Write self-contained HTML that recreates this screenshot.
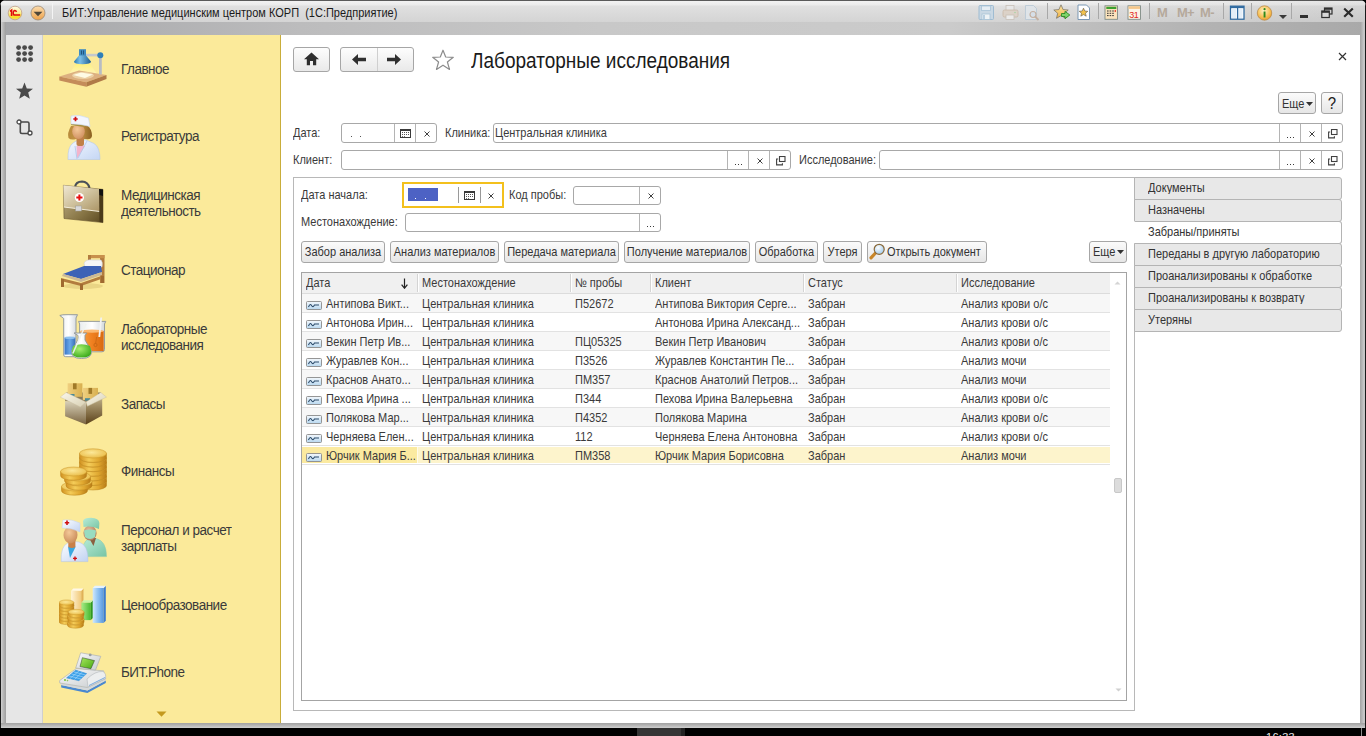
<!DOCTYPE html>
<html><head><meta charset="utf-8">
<style>
*{box-sizing:border-box;margin:0;padding:0}
html,body{width:1366px;height:736px;overflow:hidden;background:#000;font-family:"Liberation Sans",sans-serif;font-size:11px;letter-spacing:0;color:#333}
.a{position:absolute}
#win{position:absolute;left:0;top:0;width:1366px;height:728px;background:#a9abae;border-radius:6px 6px 0 0;overflow:hidden}
#rd{position:absolute;left:1365px;top:0;width:1px;height:728px;background:#1a1a1a}
#tb{position:absolute;left:0;top:0;width:1366px;height:22px;background:linear-gradient(90deg,rgba(0,0,0,0) 0,rgba(0,0,0,0) 1000px,rgba(0,0,0,0.05) 1366px),linear-gradient(#5a5a5a 0,#5a5a5a 1px,#f2f2f2 1px,#ebebeb 5px,#e0e0e0 6px,#d4d4d4 22px)}
#band{position:absolute;left:0;top:22px;width:1366px;height:13px;background:linear-gradient(90deg,#a4a5a8 0,#bcbcbd 300px,#c8c8c8 600px,#cbcbcb 950px,#b3b3b3 1200px,#a9a9a9 1366px)}
#lb{position:absolute;left:0;top:0;width:1px;height:728px;background:#1a1a1a}
#lb2{position:absolute;left:1px;top:22px;width:5px;height:706px;background:linear-gradient(90deg,#d0d0d0 0,#c4c4c4 1px,#b0b0b0 3px,#9e9e9e 5px)}
#rb{position:absolute;left:1360px;top:22px;width:6px;height:706px;background:linear-gradient(90deg,#a4a4a4 0,#b4b4b4 2px,#cacaca 4px,#c0c0c0 5px,#1a1a1a 5px)}
#bb{position:absolute;left:1px;top:723px;width:1364px;height:5px;background:linear-gradient(#a2a2a2 0,#b2b2b2 2px,#c6c6c6 4px,#cfcfcf 5px)}
#content{position:absolute;left:6px;top:35px;width:1354px;height:688px;background:#fff}
#lp{position:absolute;left:6px;top:35px;width:37px;height:688px;background:#e6e6e6;border-right:1px solid #cfcfcf}
#yp{position:absolute;left:43px;top:35px;width:238px;height:688px;background:#fbea9a;border-right:1px solid #c9ad3a}
.si{position:absolute;left:121px;font-size:13.5px;letter-spacing:-0.5px;color:#3a3a3a;line-height:14px;white-space:nowrap;transform:scaleY(1.13);transform-origin:0 0}
.btn{position:absolute;border:1px solid #a6a6a6;border-radius:3px;background:linear-gradient(#fdfdfd,#e9e9e9);}
.fld{position:absolute;border:1px solid #a8a8a8;border-radius:3px;background:#fff}
.lbl{position:absolute;color:#3a3a3a;white-space:nowrap;transform:scaleY(1.12);transform-origin:0 0}
.dv{position:absolute;top:0;bottom:0;width:1px;background:#b8b8b8}
.tab{position:absolute;left:1134px;width:208px;height:23px;background:#e8e8e8;border:1px solid #b4b4b4;border-radius:0 3px 3px 0;padding-left:13px;line-height:19px;color:#333}
.cb{position:absolute;height:22px;top:241px;border:1px solid #a6a6a6;border-radius:3px;background:linear-gradient(#fbfbfb,#e6e6e6);line-height:19px;text-align:center;color:#333;white-space:nowrap}
.hd{position:absolute;top:0;height:20px;line-height:20px;color:#333;white-space:nowrap}
.row{position:absolute;left:0;width:808px;height:19px;border-bottom:1px solid #e4e4e4}
.ic{text-align:center;line-height:0}
.t{display:inline-block;transform:scaleY(1.12);transform-origin:0 0;position:relative;top:-1px}
.c{position:absolute;top:0;line-height:18px;white-space:nowrap;color:#333}
</style></head><body>
<div class="a" style="left:637px;top:728px;width:44px;height:8px;background:#353535"></div>
<div class="a" style="left:681px;top:728px;width:4px;height:8px;background:#222"></div>
<div class="a" style="left:1361px;top:728px;width:1px;height:8px;background:#8a8a8a"></div>
<div class="a" style="left:1266px;top:731px;font-size:11px;color:#e8e8e8;line-height:12px;letter-spacing:0.3px">16:33</div>
<div id="win">
  <div id="tb"></div>
  <div id="band"></div>
  <!-- title bar content -->
  <svg class="a" style="left:7px;top:5px" width="16" height="16" viewBox="0 0 16 16">
    <defs><linearGradient id="g1c" x1="0" y1="0" x2="0" y2="1"><stop offset="0" stop-color="#fffbe8"/><stop offset="0.45" stop-color="#fbf09a"/><stop offset="0.8" stop-color="#f8e020"/><stop offset="1" stop-color="#f0e070"/></linearGradient></defs>
    <circle cx="8" cy="8" r="6.8" fill="url(#g1c)" stroke="#c0a088" stroke-width="0.8"/>
    <path d="M3 6.4 L4.6 5.1 V10.9" fill="none" stroke="#e00c0c" stroke-width="1.6"/>
    <path d="M9.6 6.8 Q8.9 5.4 7.6 5.5 Q6.2 5.8 6.2 8 Q6.2 10.1 7.8 10.1 L13.2 10.1" fill="none" stroke="#e00c0c" stroke-width="1.5"/>
  </svg>
  <svg class="a" style="left:30px;top:5px" width="16" height="16" viewBox="0 0 16 16">
    <defs><linearGradient id="gdd" x1="0" y1="0" x2="0" y2="1"><stop offset="0" stop-color="#fbdcae"/><stop offset="1" stop-color="#eea24a"/></linearGradient></defs>
    <circle cx="8" cy="8" r="7" fill="url(#gdd)" stroke="#9a8a78" stroke-width="0.8"/>
    <path d="M3.6 6.8 L12.4 6.8 L8 11.2 Z" fill="#4e4638"/>
  </svg>
  <div class="a" style="left:52px;top:3px;width:1px;height:16px;background:#b8b8b8;border-right:1px solid #f4f4f4"></div>
  <div class="lbl" style="left:62px;top:5px;color:#1a1a1a;line-height:14px">БИТ:Управление медицинским центром КОРП&nbsp; (1С:Предприятие)</div>

  
  <!-- right toolbar icons -->
  <svg class="a" style="left:978px;top:4px" width="17" height="17" viewBox="0 0 17 17">
    <rect x="1" y="1.5" width="14.5" height="14" rx="1" fill="#c9d8e4" stroke="#9fbcd2"/>
    <rect x="3.5" y="2" width="9" height="4.5" fill="#e6eef4" stroke="#a9c3d6" stroke-width="0.8"/>
    <rect x="4" y="10" width="8" height="5.5" fill="#eef3f6" stroke="#a9c3d6" stroke-width="0.8"/>
    <rect x="5" y="11" width="2" height="4" fill="#b9cfe0"/>
  </svg>
  <svg class="a" style="left:1002px;top:4px" width="17" height="17" viewBox="0 0 17 17">
    <rect x="4" y="1.5" width="8" height="5" fill="#e8e8e8" stroke="#c8c0b8" stroke-width="0.8"/>
    <rect x="1" y="6" width="15" height="7" rx="1.5" fill="#dcd2c8" stroke="#c9b7a6" stroke-width="0.8"/>
    <rect x="4" y="11" width="8" height="4.5" fill="#ececec" stroke="#c8c0b8" stroke-width="0.8"/>
    <circle cx="13" cy="8.5" r="0.7" fill="#9bd39b"/>
  </svg>
  <svg class="a" style="left:1024px;top:4px" width="17" height="17" viewBox="0 0 17 17">
    <path d="M1.5 1.5 H9.5 L12.5 4.5 V15.5 H1.5 Z" fill="#dfe4e8" stroke="#b6c6d4" stroke-width="0.8"/>
    <circle cx="9" cy="10.5" r="3" fill="#d6dfe8" stroke="#c4b0a0" stroke-width="1.2"/>
    <path d="M11 12.5 L14.5 16" stroke="#c4b0a0" stroke-width="1.8"/>
  </svg>
  <div class="a" style="left:1047px;top:3px;width:1px;height:16px;background:#a8a8a8"></div>
  <svg class="a" style="left:1053px;top:4px" width="18" height="17" viewBox="0 0 18 17">
    <defs><linearGradient id="gst" x1="0" y1="0" x2="0" y2="1"><stop offset="0" stop-color="#fde7a8"/><stop offset="1" stop-color="#f0b040"/></linearGradient></defs>
    <path d="M8 0.8 L10.1 5.6 L15.2 6 L11.3 9.3 L12.5 14.3 L8 11.6 L3.5 14.3 L4.7 9.3 L0.8 6 L5.9 5.6 Z" fill="url(#gst)" stroke="#6f6a5e" stroke-width="0.7"/>
    <path d="M8.5 9.5 H12 V7.3 L16.8 11 L12 14.7 V12.5 H8.5 Z" fill="#7fd36a" stroke="#2e8a24" stroke-width="0.9"/>
  </svg>
  <svg class="a" style="left:1077px;top:4px" width="14" height="17" viewBox="0 0 14 17">
    <path d="M1 1 H9.5 L12.5 4 V15.5 H1 Z" fill="#fff" stroke="#6e8fae" stroke-width="0.9"/>
    <path d="M6.5 4.2 L7.8 7 L10.8 7.3 L8.5 9.2 L9.2 12.2 L6.5 10.6 L3.8 12.2 L4.5 9.2 L2.2 7.3 L5.2 7 Z" fill="#f2c24c" stroke="#5e5548" stroke-width="0.6"/>
  </svg>
  <div class="a" style="left:1098px;top:3px;width:1px;height:16px;background:#a8a8a8"></div>
  <svg class="a" style="left:1104px;top:5px" width="15" height="15" viewBox="0 0 15 15">
    <rect x="1" y="0.8" width="12.5" height="13.5" fill="#fbe3bd" stroke="#7f8c86" stroke-width="0.9"/>
    <rect x="2.3" y="1.8" width="10" height="2.2" fill="#3aa02e"/>
    <g fill="#333"><rect x="3" y="5.5" width="1.6" height="1"/><rect x="5.6" y="5.5" width="1.6" height="1"/><rect x="3" y="7.8" width="1.6" height="1"/><rect x="5.6" y="7.8" width="1.6" height="1"/><rect x="8.2" y="7.8" width="1.6" height="1"/><rect x="3" y="10.1" width="1.6" height="1"/><rect x="5.6" y="10.1" width="1.6" height="1"/><rect x="8.2" y="10.1" width="1.6" height="1"/><rect x="8.2" y="5.5" width="1.6" height="1"/></g>
    <rect x="10.6" y="5.2" width="1.4" height="1.6" fill="#e03020"/>
  </svg>
  <svg class="a" style="left:1127px;top:5px" width="15" height="15" viewBox="0 0 15 15">
    <rect x="1" y="0.8" width="12.5" height="13.5" fill="#fdf4e6" stroke="#7f8c86" stroke-width="0.9"/>
    <rect x="1.5" y="1.3" width="11.5" height="2.6" fill="#f5c78a"/>
    <text x="2.2" y="12.6" font-family="Liberation Sans" font-size="9" letter-spacing="-0.4" fill="#e02818">31</text>
  </svg>
  <div class="a" style="left:1149px;top:3px;width:1px;height:16px;background:#a8a8a8"></div>
  <div class="a" style="left:1157px;top:6px;font-size:13px;font-weight:bold;letter-spacing:-0.3px;color:#b5a99c;line-height:14px">M</div>
  <div class="a" style="left:1177px;top:6px;font-size:13px;font-weight:bold;letter-spacing:-0.8px;color:#b5a99c;line-height:14px">M+</div>
  <div class="a" style="left:1200px;top:6px;font-size:13px;font-weight:bold;letter-spacing:-0.5px;color:#b5a99c;line-height:14px">M-</div>
  <div class="a" style="left:1223px;top:3px;width:1px;height:16px;background:#a8a8a8"></div>
  <svg class="a" style="left:1229px;top:5px" width="17" height="16" viewBox="0 0 17 16">
    <rect x="1.5" y="1.2" width="13.5" height="13" fill="#fff" stroke="#2f6aa0" stroke-width="1.3"/>
    <rect x="1.5" y="1.2" width="13.5" height="2" fill="#2f6aa0"/>
    <rect x="3" y="3.5" width="4.5" height="9.5" fill="#e3eef8"/><rect x="9" y="3.5" width="4.5" height="9.5" fill="#e3eef8"/>
    <rect x="8" y="2" width="1.2" height="12" fill="#2f6aa0"/>
  </svg>
  <div class="a" style="left:1251px;top:3px;width:1px;height:16px;background:#a8a8a8"></div>
  <svg class="a" style="left:1256px;top:5px" width="17" height="16" viewBox="0 0 17 16">
    <defs><radialGradient id="ginf" cx="0.45" cy="0.35" r="0.7"><stop offset="0" stop-color="#fff3c8"/><stop offset="0.6" stop-color="#f7c25a"/><stop offset="1" stop-color="#e89a2a"/></radialGradient></defs>
    <circle cx="8.5" cy="8" r="7.2" fill="url(#ginf)" stroke="#b48442" stroke-width="0.7"/>
    <rect x="7.6" y="6.5" width="1.9" height="6" fill="#2f8a1c"/><circle cx="8.55" cy="4.2" r="1.1" fill="#2f8a1c"/>
  </svg>
  <svg class="a" style="left:1278px;top:14px" width="10" height="6" viewBox="0 0 10 6"><path d="M1 1 H9 L5 5 Z" fill="#3a3a3a"/></svg>
  <div class="a" style="left:1291px;top:3px;width:1px;height:16px;background:#a8a8a8"></div>
  <div class="a" style="left:1300px;top:15px;width:8px;height:2.5px;background:#303030"></div>
  <svg class="a" style="left:1320px;top:6px" width="14" height="13" viewBox="0 0 14 13">
    <rect x="4.5" y="2" width="7.5" height="6" fill="none" stroke="#303030" stroke-width="1.2"/><rect x="4.5" y="2" width="7.5" height="1.8" fill="#303030"/>
    <rect x="1.8" y="5" width="7.5" height="6.5" fill="#d8d8d8" stroke="#303030" stroke-width="1.2"/><rect x="1.8" y="5" width="7.5" height="1.8" fill="#303030"/>
  </svg>
  <svg class="a" style="left:1342px;top:7px" width="13" height="11" viewBox="0 0 13 11"><path d="M2.2 1.5 L10.8 9.7 M10.8 1.5 L2.2 9.7" stroke="#2c2c2c" stroke-width="2.2"/></svg>
  <div id="lb"></div>
  <div id="lb2"></div>
  <div id="rb"></div><div id="rd"></div>
  <div id="bb"></div>
  <div id="content"></div>
  <div id="lp"></div>
  <div id="yp"></div>
  <!-- left icon panel -->
  <svg class="a" style="left:16px;top:45px" width="18" height="18" viewBox="0 0 18 18" fill="#4a4a4a">
    <circle cx="2.6" cy="2.6" r="2.4"/><circle cx="8.6" cy="2.6" r="2.4"/><circle cx="14.6" cy="2.6" r="2.4"/>
    <circle cx="2.6" cy="8.6" r="2.4"/><circle cx="8.6" cy="8.6" r="2.4"/><circle cx="14.6" cy="8.6" r="2.4"/>
    <circle cx="2.6" cy="14.6" r="2.4"/><circle cx="8.6" cy="14.6" r="2.4"/><circle cx="14.6" cy="14.6" r="2.4"/>
  </svg>
  <svg class="a" style="left:15px;top:82px" width="19" height="18" viewBox="0 0 19 18">
    <path d="M9.5 0.6 L11.8 6.4 L18 6.7 L13.2 10.6 L14.8 16.8 L9.5 13.4 L4.2 16.8 L5.8 10.6 L1 6.7 L7.2 6.4 Z" fill="#4a4a4a"/>
  </svg>
  <svg class="a" style="left:16px;top:119px" width="18" height="17" viewBox="0 0 18 17">
    <path d="M3 3 H11.5 Q13 3 13 4.5 V12.5" fill="none" stroke="#4a4a4a" stroke-width="1.6"/>
    <path d="M4.3 4 V12.8 Q4.3 14.5 6 14.5 H14" fill="none" stroke="#4a4a4a" stroke-width="1.6"/>
    <circle cx="3" cy="3" r="2" fill="#fff" stroke="#4a4a4a" stroke-width="1.3"/>
    <circle cx="14" cy="14" r="2" fill="#fff" stroke="#4a4a4a" stroke-width="1.3"/>
  </svg>

<svg class="a" style="left:59px;top:45.5px" width="48" height="48" viewBox="0 0 48 48">
<defs><linearGradient id="shd" x1="0" y1="0" x2="1" y2="0"><stop offset="0" stop-color="#2a78b0"/><stop offset="0.35" stop-color="#7cc0e8"/><stop offset="1" stop-color="#1f5f90"/></linearGradient>
<linearGradient id="cone" x1="0" y1="0" x2="0" y2="1"><stop offset="0" stop-color="#fff27a"/><stop offset="1" stop-color="#fff7c0" stop-opacity="0.6"/></linearGradient></defs>
<path d="M17 18 L31 18 L38 28 L10 28 Z" fill="url(#cone)"/>
<path d="M0.3 30.5 L20 24.6 L47.5 29 L27.3 36.3 Z" fill="#dcb080"/>
<path d="M0.3 30.5 L27.3 36.3 L27.3 40.8 L0.3 34.5 Z" fill="#c48c5a"/>
<path d="M27.3 36.3 L47.5 29 L47.5 33 L27.3 40.8 Z" fill="#b07a48"/>
<path d="M14 29 L22 26.5 L34 28.5 L26 32 Z" fill="#fdfdf6"/>
<ellipse cx="24" cy="29.5" rx="11" ry="3.5" fill="#fff8d0" opacity="0.45"/>
<rect x="40" y="10" width="2.8" height="18.5" fill="#b8bcc4"/>
<rect x="27" y="7.8" width="14" height="2.6" fill="#c4c8cc"/>
<circle cx="41.3" cy="9.3" r="3" fill="#2f7fb8"/>
<rect x="20" y="3.2" width="7" height="7" fill="#3f8cc0"/>
<rect x="22" y="4.5" width="0.9" height="4" fill="#1f4f78"/><rect x="24" y="4.5" width="0.9" height="4" fill="#1f4f78"/>
<path d="M20 9.5 H27 L32 15.5 Q32 18.2 23.5 18.2 Q15 18.2 15 15.5 Z" fill="url(#shd)"/>
</svg>
<div class="si" style="top:61.8px">Главное</div>
<svg class="a" style="left:59px;top:112.5px" width="48" height="48" viewBox="0 0 48 48">
<defs><linearGradient id="coat" x1="0" y1="0" x2="1" y2="1"><stop offset="0" stop-color="#f4f8ff"/><stop offset="1" stop-color="#c4d6f4"/></linearGradient>
<linearGradient id="hair" x1="0" y1="0" x2="1" y2="0"><stop offset="0" stop-color="#b88a3a"/><stop offset="0.5" stop-color="#c8984a"/><stop offset="1" stop-color="#8a6020"/></linearGradient>
<radialGradient id="face" cx="0.4" cy="0.35" r="0.7"><stop offset="0" stop-color="#f4c898"/><stop offset="1" stop-color="#d09060"/></radialGradient></defs>
<path d="M9 46.5 Q8.5 34 14 30 L19 27 L27 27 L35 30.5 Q41 34 41 46.5 Z" fill="url(#coat)" stroke="#b4c8ec" stroke-width="0.6"/>
<path d="M17.5 33 L26 33 L18 45.5 Z" fill="#f4b4cc"/>
<path d="M16 33 L18 46 M28 28 L19 45" stroke="#a8c0e8" stroke-width="0.7" fill="none"/>
<path d="M12 13 Q8 20 9.5 25 Q12 27.5 17 26 L27 26 Q32 27 33 23 Q33 16 28 12 Z" fill="url(#hair)"/>
<rect x="17.5" y="23" width="7.5" height="10" rx="2" fill="#c08048"/>
<ellipse cx="19.5" cy="18.5" rx="6.3" ry="7.5" fill="url(#face)"/>
<path d="M12 10 L26 12.5 L25 14 L12 12 Z" fill="#a89040"/>
<path d="M12 3 Q20 1 29.5 5 L31 13.5 Q21 10.5 12 11 Z" fill="#f2f6ff" stroke="#c8d6ee" stroke-width="0.6"/>
<path d="M14.3 6 H18.7 M16.5 3.8 V8.2" stroke="#d01010" stroke-width="1.7"/>
</svg>
<div class="si" style="top:128.8px">Регистратура</div>
<svg class="a" style="left:59px;top:179.5px" width="48" height="48" viewBox="0 0 48 48">
<defs><linearGradient id="flap" x1="0" y1="0" x2="1" y2="1"><stop offset="0" stop-color="#f0e8d4"/><stop offset="0.5" stop-color="#cdbf9a"/><stop offset="1" stop-color="#a89060"/></linearGradient>
<linearGradient id="low" x1="0" y1="0" x2="1" y2="1"><stop offset="0" stop-color="#c8b890"/><stop offset="0.6" stop-color="#8a7848"/><stop offset="1" stop-color="#5a4820"/></linearGradient></defs>
<path d="M16 7 Q17 1.5 23 1.5 Q29 1.8 30.5 8" fill="none" stroke="#4a5058" stroke-width="2.2"/>
<path d="M4.4 5.3 L44 9.4 L44 42.6 L5 38.5 Z" fill="url(#low)" stroke="#6a5830" stroke-width="0.6"/>
<path d="M4.4 5.3 L44 9.4 L44 14 L40.5 31.5 L5 27 Z" fill="url(#flap)"/>
<path d="M5 27 L40.5 31.5" stroke="#fbf6e8" stroke-width="0.9"/>
<path d="M40 9 L44 9.4 L44 42.6 L40.5 42 Z" fill="#4a3a1a"/>
<path d="M40 9 L44 9.4 L44 16 L40.5 15 Z" fill="#111"/>
<rect x="16.6" y="26" width="5.8" height="5" fill="#d8d8d8" stroke="#9a9a9a" stroke-width="0.5"/>
<circle cx="20.4" cy="17.5" r="4.6" fill="#fff"/>
<path d="M17.3 17.5 H23.5 M20.4 14.4 V20.6" stroke="#e81010" stroke-width="2"/>
</svg>
<div class="si" style="top:187.8px">Медицинская<br>деятельность</div>
<svg class="a" style="left:59px;top:246px" width="48" height="48" viewBox="0 0 48 48">
<ellipse cx="24" cy="40" rx="20" ry="3" fill="#d8c070" opacity="0.5"/>
<rect x="41" y="9" width="4.5" height="28" fill="#b27c3e"/>
<rect x="29" y="9" width="16.5" height="3.2" fill="#c8904c"/>
<rect x="29" y="9" width="3" height="12" fill="#b27c3e"/>
<path d="M25 17 Q27 13 34 14 L42 14 Q44 16 43 21 L26 22 Z" fill="#f6f6f6" stroke="#cfcfcf" stroke-width="0.6"/>
<path d="M4 28 L25 20 L42 20 L43 26 L22 33 Z" fill="#3d62b6"/>
<path d="M3 30 L4 28 L22 33 L43 26 L43 29 L22 36 Z" fill="#cdb994"/>
<path d="M2 32 L22 37 L45 29 L45 32 L22 40 L2 35 Z" fill="#b27c3e"/>
<rect x="2" y="33" width="3" height="8" fill="#a06a30"/>
<rect x="21" y="38" width="3" height="6" fill="#a06a30"/>
<rect x="42" y="30" width="3" height="7" fill="#a06a30"/>
</svg>
<div class="si" style="top:262.8px">Стационар</div>
<svg class="a" style="left:59px;top:313.5px" width="48" height="48" viewBox="0 0 48 48">
<defs><linearGradient id="gls" x1="0" y1="0" x2="1" y2="0"><stop offset="0" stop-color="#e8ecee"/><stop offset="0.5" stop-color="#ffffff"/><stop offset="1" stop-color="#d0d6da"/></linearGradient>
<linearGradient id="blu" x1="0" y1="0" x2="1" y2="0"><stop offset="0" stop-color="#3c78c8"/><stop offset="0.5" stop-color="#6aa8e8"/><stop offset="1" stop-color="#3a70b8"/></linearGradient>
<linearGradient id="org" x1="0" y1="0" x2="1" y2="0"><stop offset="0" stop-color="#f8a040"/><stop offset="0.5" stop-color="#f08020"/><stop offset="1" stop-color="#d86a10"/></linearGradient>
<radialGradient id="grn" cx="0.4" cy="0.35" r="0.7"><stop offset="0" stop-color="#a8f070"/><stop offset="1" stop-color="#38a818"/></radialGradient></defs>
<path d="M0.8 1.5 Q3 0.5 8 0.7 L18.5 0.7 L17 4 V41 Q17 42.7 15 42.7 H6.7 Q4.7 42.7 4.7 41 V4.5 Z" fill="url(#gls)" stroke="#8c9498" stroke-width="0.9"/>
<rect x="5.5" y="23.6" width="10.8" height="17" fill="url(#blu)"/>
<ellipse cx="10.9" cy="23.8" rx="5.3" ry="1.2" fill="#8cc0f0"/>
<path d="M19.6 7.4 H46.8 L45.5 10 V35.5 Q45.5 37.8 43 37.8 H23 Q20.6 37.8 20.6 35.5 V10 Z" fill="url(#gls)" stroke="#8c9498" stroke-width="0.9"/>
<rect x="21.4" y="16.9" width="23.3" height="20.2" fill="url(#org)"/>
<ellipse cx="33" cy="17.2" rx="11.6" ry="1.6" fill="#fbb870"/>
<path d="M42.2 3.5 L40.3 23" stroke="#f2f2f2" stroke-width="1.8"/>
<circle cx="36.5" cy="31" r="1.6" fill="none" stroke="#c06010" stroke-width="0.7"/>
<path d="M36.6 29.5 L37.6 23" stroke="#c06010" stroke-width="0.6"/>
<path d="M15 19 H27.7 L26 21.5 V26 L32.3 36.5 Q33.5 44.5 22.5 44.5 Q11.5 44.5 12.7 36.5 L19 26 V21.5 Z" fill="url(#gls)" stroke="#8c9498" stroke-width="0.9"/>
<path d="M14 32 Q22.5 28.5 31 32 L32.2 37 Q33 43.6 22.5 43.6 Q12 43.6 12.9 37 Z" fill="url(#grn)"/>
<path d="M27 10 L13.8 39.5" stroke="#f0f4f0" stroke-width="1.6" opacity="0.9"/>
</svg>
<div class="si" style="top:321.8px">Лабораторные<br>исследования</div>
<svg class="a" style="left:59px;top:380px" width="48" height="48" viewBox="0 0 48 48">
<defs><linearGradient id="bxl" x1="0" y1="0" x2="0" y2="1"><stop offset="0" stop-color="#d8d0b8"/><stop offset="1" stop-color="#7a6440"/></linearGradient>
<linearGradient id="bxr" x1="0" y1="0" x2="0" y2="1"><stop offset="0" stop-color="#b8a880"/><stop offset="1" stop-color="#5a4018"/></linearGradient>
<linearGradient id="bxy" x1="0" y1="0" x2="1" y2="0"><stop offset="0" stop-color="#f0d080"/><stop offset="1" stop-color="#d8b050"/></linearGradient>
<linearGradient id="flp" x1="0" y1="0" x2="1" y2="1"><stop offset="0" stop-color="#fbf8ec"/><stop offset="1" stop-color="#d8d0b4"/></linearGradient></defs>
<path d="M7.2 12.5 L41.8 12.5 L43.2 19.2 L27 22 L6.1 21.3 Z" fill="#8a7a58"/>
<rect x="8.6" y="3.3" width="14.8" height="13.5" fill="url(#bxy)"/>
<rect x="14" y="3.3" width="3.6" height="6" fill="#a07a28"/>
<rect x="10.5" y="14" width="5" height="2.5" fill="#4a8a98"/>
<rect x="23.8" y="7.9" width="15.2" height="12" fill="url(#bxy)"/>
<rect x="29.5" y="7.9" width="3.6" height="6" fill="#a07a28"/>
<rect x="26" y="18.2" width="5" height="2.4" fill="#4a8a98"/>
<path d="M6.1 21.3 L27 22 L27 44.6 L6.1 36.2 Z" fill="url(#bxl)"/>
<path d="M27 22 L43.2 19.2 L43.2 35.5 L27 44.6 Z" fill="url(#bxr)"/>
<path d="M1.2 17.1 L7.2 12.5 L27 22 L21.3 27 Z" fill="url(#flp)" stroke="#c8bc9a" stroke-width="0.4"/>
<path d="M27 22 L41.8 12.5 L47.5 17.1 L28.4 26.3 Z" fill="url(#flp)" stroke="#c8bc9a" stroke-width="0.4"/>
</svg>
<div class="si" style="top:396.8px">Запасы</div>
<svg class="a" style="left:59px;top:447.5px" width="48" height="48" viewBox="0 0 48 48"><defs><linearGradient id="cedge" x1="0" y1="0" x2="1" y2="0"><stop offset="0" stop-color="#d09020"/><stop offset="0.35" stop-color="#f4cc58"/><stop offset="0.7" stop-color="#e0a830"/><stop offset="1" stop-color="#b87c18"/></linearGradient>
<radialGradient id="ctop" cx="0.45" cy="0.4" r="0.7"><stop offset="0" stop-color="#fce898"/><stop offset="1" stop-color="#e8b840"/></radialGradient></defs><path d="M20.5 33.0 V37.4 A13.5 4.6 0 0 0 47.5 37.4 V33.0 Z" fill="url(#cedge)" stroke="#b88018" stroke-width="0.5"/><ellipse cx="34" cy="33.0" rx="13.5" ry="4.6" fill="url(#ctop)" stroke="#c89428" stroke-width="0.5"/><path d="M20.5 28.4 V32.8 A13.5 4.6 0 0 0 47.5 32.8 V28.4 Z" fill="url(#cedge)" stroke="#b88018" stroke-width="0.5"/><ellipse cx="34" cy="28.4" rx="13.5" ry="4.6" fill="url(#ctop)" stroke="#c89428" stroke-width="0.5"/><path d="M20.5 23.8 V28.200000000000003 A13.5 4.6 0 0 0 47.5 28.200000000000003 V23.8 Z" fill="url(#cedge)" stroke="#b88018" stroke-width="0.5"/><ellipse cx="34" cy="23.8" rx="13.5" ry="4.6" fill="url(#ctop)" stroke="#c89428" stroke-width="0.5"/><path d="M20.5 19.2 V23.6 A13.5 4.6 0 0 0 47.5 23.6 V19.2 Z" fill="url(#cedge)" stroke="#b88018" stroke-width="0.5"/><ellipse cx="34" cy="19.2" rx="13.5" ry="4.6" fill="url(#ctop)" stroke="#c89428" stroke-width="0.5"/><path d="M20.5 14.6 V19.0 A13.5 4.6 0 0 0 47.5 19.0 V14.6 Z" fill="url(#cedge)" stroke="#b88018" stroke-width="0.5"/><ellipse cx="34" cy="14.6" rx="13.5" ry="4.6" fill="url(#ctop)" stroke="#c89428" stroke-width="0.5"/><path d="M20.5 10.0 V14.4 A13.5 4.6 0 0 0 47.5 14.4 V10.0 Z" fill="url(#cedge)" stroke="#b88018" stroke-width="0.5"/><ellipse cx="34" cy="10.0" rx="13.5" ry="4.6" fill="url(#ctop)" stroke="#c89428" stroke-width="0.5"/><path d="M20.5 5.4 V9.8 A13.5 4.6 0 0 0 47.5 9.8 V5.4 Z" fill="url(#cedge)" stroke="#b88018" stroke-width="0.5"/><ellipse cx="34" cy="5.4" rx="13.5" ry="4.6" fill="url(#ctop)" stroke="#c89428" stroke-width="0.5"/><path d="M2.5 38.5 V42.7 A13 4.5 0 0 0 28.5 42.7 V38.5 Z" fill="url(#cedge)" stroke="#b88018" stroke-width="0.5"/><ellipse cx="15.5" cy="38.5" rx="13" ry="4.5" fill="url(#ctop)" stroke="#c89428" stroke-width="0.5"/><path d="M7 33.5 V37.7 A13 4.5 0 0 0 33 37.7 V33.5 Z" fill="url(#cedge)" stroke="#b88018" stroke-width="0.5"/><ellipse cx="20" cy="33.5" rx="13" ry="4.5" fill="url(#ctop)" stroke="#c89428" stroke-width="0.5"/><path d="M5.5 28.5 V32.7 A13 4.5 0 0 0 31.5 32.7 V28.5 Z" fill="url(#cedge)" stroke="#b88018" stroke-width="0.5"/><ellipse cx="18.5" cy="28.5" rx="13" ry="4.5" fill="url(#ctop)" stroke="#c89428" stroke-width="0.5"/><path d="M1.5999999999999996 23.5 V27.7 A13 4.5 0 0 0 27.6 27.7 V23.5 Z" fill="url(#cedge)" stroke="#b88018" stroke-width="0.5"/><ellipse cx="14.6" cy="23.5" rx="13" ry="4.5" fill="url(#ctop)" stroke="#c89428" stroke-width="0.5"/></svg>
<div class="si" style="top:463.8px">Финансы</div>
<svg class="a" style="left:59px;top:514.5px" width="48" height="48" viewBox="0 0 48 48">
<defs><linearGradient id="scr" x1="0" y1="0" x2="1" y2="1"><stop offset="0" stop-color="#b8ecd8"/><stop offset="1" stop-color="#78c4a4"/></linearGradient>
<linearGradient id="wc" x1="0" y1="0" x2="1" y2="1"><stop offset="0" stop-color="#ffffff"/><stop offset="1" stop-color="#c0d2f2"/></linearGradient>
<radialGradient id="fc" cx="0.4" cy="0.35" r="0.7"><stop offset="0" stop-color="#f4c898"/><stop offset="1" stop-color="#c88a58"/></radialGradient>
<radialGradient id="fc2" cx="0.4" cy="0.35" r="0.7"><stop offset="0" stop-color="#e8c0a0"/><stop offset="1" stop-color="#a87858"/></radialGradient></defs>
<path d="M23 41.6 Q22.5 27 30 23.5 L37 23.5 Q47.5 26 47.5 41.6 Z" fill="url(#scr)" stroke="#8ccab0" stroke-width="0.5"/>
<path d="M30 23 H37 L34.5 31 Z" fill="#8a6040"/>
<ellipse cx="31" cy="18" rx="6.6" ry="7.5" fill="url(#fc2)"/>
<path d="M25 15.5 Q31 13.5 37 15.5 L36 22 Q31 26 26 22 Z" fill="#98dcc0"/>
<path d="M24 6 Q25 2.7 32 2.7 Q40 3 40.4 8 L40 14 Q32 10.5 24.5 12 Z" fill="url(#scr)"/>
<path d="M2.2 46.6 Q1.5 31 9 28 L13 26.5 L20 27 Q29.5 30 29 46.6 Z" fill="url(#wc)" stroke="#b0c4e8" stroke-width="0.5"/>
<path d="M9 31.7 L16.7 31.7 L11 43 Z" fill="#3aa8e0"/>
<path d="M9.3 22 H16.4 V32 Q13 34 9.3 32 Z" fill="#c88048"/>
<ellipse cx="11.5" cy="20" rx="7" ry="8.5" fill="url(#fc)"/>
<path d="M4 5 Q12 3.5 21 8 L21 17 Q12 12.5 3 13 Z" fill="url(#wc)" stroke="#c4d2ec" stroke-width="0.5"/>
<path d="M5.8 7.8 H10.2 M8 5.6 V10" stroke="#d01010" stroke-width="1.6"/>
<path d="M14 43.4 H18 M16 41.4 V45.4" stroke="#d01010" stroke-width="1.4"/>
</svg>
<div class="si" style="top:522.8px">Персонал и расчет<br>зарплаты</div>
<svg class="a" style="left:59px;top:581.5px" width="48" height="48" viewBox="0 0 48 48"><defs><linearGradient id="yb" x1="0" y1="0" x2="1" y2="0"><stop offset="0" stop-color="#fff4d8"/><stop offset="1" stop-color="#f0c878"/></linearGradient>
<linearGradient id="gb" x1="0" y1="0" x2="1" y2="0"><stop offset="0" stop-color="#a8ec88"/><stop offset="1" stop-color="#48b830"/></linearGradient>
<linearGradient id="bb2" x1="0" y1="0" x2="1" y2="0"><stop offset="0" stop-color="#d0e8fc"/><stop offset="0.4" stop-color="#98c8f4"/><stop offset="1" stop-color="#5898e0"/></linearGradient></defs><rect x="12.1" y="8.8" width="10.2" height="20.099999999999998" fill="url(#yb)"/><path d="M22.3 8.8 L24.5 6.6 V26.7 L22.3 28.9 Z" fill="#e0b058"/><path d="M12.1 8.8 L14.3 6.6 H24.5 L22.3 8.8 Z" fill="#fff8e8"/><rect x="22.4" y="20.5" width="9.400000000000002" height="17.6" fill="url(#gb)"/><path d="M31.8 20.5 L34 18.3 V35.9 L31.8 38.1 Z" fill="#309820"/><path d="M22.4 20.5 L24.599999999999998 18.3 H34 L31.8 20.5 Z" fill="#c8f4a8"/><rect x="33.7" y="6.0" width="10.899999999999995" height="34.9" fill="url(#bb2)"/><path d="M44.599999999999994 6.0 L46.8 3.8 V38.699999999999996 L44.599999999999994 40.9 Z" fill="#3c7cd0"/><path d="M33.7 6.0 L35.900000000000006 3.8 H46.8 L44.599999999999994 6.0 Z" fill="#e4f2fe"/><path d="M0.09999999999999964 37.0 V40.0 A7.4 2.6 0 0 0 14.9 40.0 V37.0 Z" fill="url(#cedge)" stroke="#b88018" stroke-width="0.4"/><ellipse cx="7.5" cy="37.0" rx="7.4" ry="2.6" fill="url(#ctop)" stroke="#c89428" stroke-width="0.4"/><path d="M0.09999999999999964 33.7 V36.7 A7.4 2.6 0 0 0 14.9 36.7 V33.7 Z" fill="url(#cedge)" stroke="#b88018" stroke-width="0.4"/><ellipse cx="7.5" cy="33.7" rx="7.4" ry="2.6" fill="url(#ctop)" stroke="#c89428" stroke-width="0.4"/><path d="M0.09999999999999964 30.4 V33.4 A7.4 2.6 0 0 0 14.9 33.4 V30.4 Z" fill="url(#cedge)" stroke="#b88018" stroke-width="0.4"/><ellipse cx="7.5" cy="30.4" rx="7.4" ry="2.6" fill="url(#ctop)" stroke="#c89428" stroke-width="0.4"/><path d="M0.09999999999999964 27.1 V30.1 A7.4 2.6 0 0 0 14.9 30.1 V27.1 Z" fill="url(#cedge)" stroke="#b88018" stroke-width="0.4"/><ellipse cx="7.5" cy="27.1" rx="7.4" ry="2.6" fill="url(#ctop)" stroke="#c89428" stroke-width="0.4"/><path d="M0.09999999999999964 23.8 V26.8 A7.4 2.6 0 0 0 14.9 26.8 V23.8 Z" fill="url(#cedge)" stroke="#b88018" stroke-width="0.4"/><ellipse cx="7.5" cy="23.8" rx="7.4" ry="2.6" fill="url(#ctop)" stroke="#c89428" stroke-width="0.4"/><path d="M0.09999999999999964 20.5 V23.5 A7.4 2.6 0 0 0 14.9 23.5 V20.5 Z" fill="url(#cedge)" stroke="#b88018" stroke-width="0.4"/><ellipse cx="7.5" cy="20.5" rx="7.4" ry="2.6" fill="url(#ctop)" stroke="#c89428" stroke-width="0.4"/><path d="M8.5 40.5 V43.5 A8 2.7 0 0 0 24.5 43.5 V40.5 Z" fill="url(#cedge)" stroke="#b88018" stroke-width="0.4"/><ellipse cx="16.5" cy="40.5" rx="8" ry="2.7" fill="url(#ctop)" stroke="#c89428" stroke-width="0.4"/><path d="M9.100000000000001 37.0 V40.0 A8 2.7 0 0 0 25.1 40.0 V37.0 Z" fill="url(#cedge)" stroke="#b88018" stroke-width="0.4"/><ellipse cx="17.1" cy="37.0" rx="8" ry="2.7" fill="url(#ctop)" stroke="#c89428" stroke-width="0.4"/><path d="M8.5 33.5 V36.5 A8 2.7 0 0 0 24.5 36.5 V33.5 Z" fill="url(#cedge)" stroke="#b88018" stroke-width="0.4"/><ellipse cx="16.5" cy="33.5" rx="8" ry="2.7" fill="url(#ctop)" stroke="#c89428" stroke-width="0.4"/><path d="M9.100000000000001 30.0 V33.0 A8 2.7 0 0 0 25.1 33.0 V30.0 Z" fill="url(#cedge)" stroke="#b88018" stroke-width="0.4"/><ellipse cx="17.1" cy="30.0" rx="8" ry="2.7" fill="url(#ctop)" stroke="#c89428" stroke-width="0.4"/></svg>
<div class="si" style="top:597.8px">Ценообразование</div>
<svg class="a" style="left:59px;top:648.5px" width="48" height="48" viewBox="0 0 48 48">
<defs><linearGradient id="pw" x1="0" y1="0" x2="1" y2="1"><stop offset="0" stop-color="#fafafa"/><stop offset="1" stop-color="#c8cccf"/></linearGradient>
<linearGradient id="pg" x1="0" y1="0" x2="1" y2="1"><stop offset="0" stop-color="#a8e860"/><stop offset="1" stop-color="#48a810"/></linearGradient></defs>
<path d="M2.2 36 L28.4 41.5 L46.8 31.5 L46.8 34 L28.4 44 L2.2 38.5 Z" fill="#4a88d0"/><path d="M0.8 34 L28.4 38.5 L46.8 29.6 L46.8 31.5 L28.4 41.5 L2.2 36 Z" fill="#d4d8dc"/>
<path d="M0.5 31.7 L17 19.7 L44.6 21.8 L46.8 29.6 L28.4 38.5 L0.8 34 Z" fill="url(#pw)" stroke="#a8aeb2" stroke-width="0.6"/>
<path d="M7.5 28.9 L16.7 21.1 L27.7 24.6 L19.9 31.7 Z" fill="#3aa0ea" stroke="#2a80c8" stroke-width="0.4"/>
<g stroke="#bfe4fc" stroke-width="0.5"><path d="M10 27 L22 30 M12.5 25 L24.5 28 M15 23 L26.5 26"/><path d="M11 29.5 L20 22 M15.5 30.5 L23.5 23"/></g>
<path d="M28 30 Q36 22 44 22.5 Q47.5 24.5 46.5 29.5 L29 38 Z" fill="#eceeef" stroke="#a8aeb2" stroke-width="0.5"/>
<path d="M30 36.5 L46 28.5" stroke="#5a98d8" stroke-width="0.8"/>
<path d="M21.7 3.8 L41.8 7.3 L36.5 21.1 L16.7 19 Z" fill="url(#pw)" stroke="#a4aaae" stroke-width="0.6"/>
<path d="M23.4 8.7 L35.5 11.6 L31.9 19.7 L21 17.6 Z" fill="url(#pg)" stroke="#2a3a2a" stroke-width="0.5"/>
<circle cx="31.2" cy="5.9" r="1.4" fill="#9aa0a4"/>
<circle cx="6" cy="31" r="1" fill="#70c030"/><circle cx="8.5" cy="31.6" r="0.8" fill="#90c860"/>
</svg>
<div class="si" style="top:664.8px">БИТ.Phone</div>
<svg class="a" style="left:156px;top:711px" width="11" height="6" viewBox="0 0 11 6"><path d="M0.5 0.5 H10.5 L5.5 5.8 Z" fill="#c49a1e"/></svg>

<div class="btn" style="left:293px;top:47px;width:37px;height:25px"></div>
<svg class="a" style="left:303px;top:52px" width="17" height="14" viewBox="0 0 17 14"><path d="M8.5 0.6 L16 7.2 H13.2 V13.2 H10 V9 H7 V13.2 H3.8 V7.2 H1 Z" fill="#2f2f2f"/></svg>
<div class="btn" style="left:340px;top:47px;width:74px;height:25px"></div>
<div class="a" style="left:377px;top:48px;width:1px;height:23px;background:#cfcfcf"></div>
<svg class="a" style="left:351px;top:53px" width="16" height="13" viewBox="0 0 16 13"><path d="M1 6.5 L7 0.9 V4.8 H15 V8.2 H7 V12.1 Z" fill="#2f2f2f"/></svg>
<svg class="a" style="left:386px;top:53px" width="16" height="13" viewBox="0 0 16 13"><path d="M15 6.5 L9 0.9 V4.8 H1 V8.2 H9 V12.1 Z" fill="#2f2f2f"/></svg>
<svg class="a" style="left:431px;top:49px" width="24" height="22" viewBox="0 0 24 22"><path d="M12 1.2 L14.7 8 L22.3 8.3 L16.4 13 L18.5 20.4 L12 16.2 L5.5 20.4 L7.6 13 L1.7 8.3 L9.3 8 Z" fill="#fff" stroke="#8c8c8c" stroke-width="1.2" stroke-linejoin="round"/></svg>
<div class="lbl" style="left:471px;top:49px;font-size:19px;letter-spacing:0;line-height:22px;color:#1a1a1a">Лабораторные исследования</div>
<svg class="a" style="left:1338px;top:52px" width="9" height="9" viewBox="0 0 9 9"><path d="M1 1 L8 8 M8 1 L1 8" stroke="#333" stroke-width="1.2"/></svg>
<div class="cb" style="left:1278px;top:92px;width:38px;height:22px;line-height:20px;text-align:left;padding-left:3px"><span class="t">Еще</span></div>
<svg class="a" style="left:1306px;top:102px" width="7" height="4" viewBox="0 0 7 4"><path d="M0 0 H7 L3.5 4 Z" fill="#333"/></svg>
<div class="cb" style="left:1321px;top:92px;width:22px;height:22px;line-height:20px;font-size:15px;letter-spacing:0;color:#222"><span class="t">?</span></div>
<div class="lbl" style="left:293px;top:125px;line-height:14px">Дата:</div>
<div class="fld" style="left:341px;top:123px;width:96px;height:20px"></div>
<div class="a" style="left:351px;top:136px;width:1px;height:1px;background:#555"></div><div class="a" style="left:360px;top:136px;width:1px;height:1px;background:#555"></div>
<div class="a" style="left:394px;top:124px;width:1px;height:18px;background:#b4b4b4"></div><svg class="a" style="left:400px;top:129px" width="11" height="9" viewBox="0 0 11 9"><rect x="0.5" y="0.5" width="10" height="8" fill="#fff" stroke="#3a3a3a" stroke-width="1"/><rect x="0.5" y="0.5" width="10" height="1.5" fill="#3a3a3a"/><g fill="#555"><rect x="2" y="3" width="1" height="1"/><rect x="4" y="3" width="1" height="1"/><rect x="6" y="3" width="1" height="1"/><rect x="8" y="3" width="1" height="1"/><rect x="2" y="5" width="1" height="1"/><rect x="4" y="5" width="1" height="1"/><rect x="6" y="5" width="1" height="1"/><rect x="8" y="5" width="1" height="1"/><rect x="2" y="7" width="1" height="0.8"/><rect x="4" y="7" width="1" height="0.8"/></g></svg>
<div class="a" style="left:415px;top:124px;width:1px;height:18px;background:#b4b4b4"></div><svg class="a" style="left:424px;top:131px" width="6" height="6" viewBox="0 0 6 6"><path d="M0.5 0.5 L5.5 5.5 M5.5 0.5 L0.5 5.5" stroke="#404040" stroke-width="1"/></svg>
<div class="lbl" style="left:445px;top:125px;line-height:14px">Клиника:</div>
<div class="fld" style="left:493px;top:123px;width:850px;height:20px"></div>
<div class="lbl" style="left:495px;top:125px;line-height:14px">Центральная клиника</div>
<div class="a" style="left:1279px;top:124px;width:1px;height:18px;background:#b4b4b4"></div><div class="a" style="left:1287px;top:137px;width:1px;height:1px;background:#3a3a3a"></div><div class="a" style="left:1290px;top:137px;width:1px;height:1px;background:#3a3a3a"></div><div class="a" style="left:1293px;top:137px;width:1px;height:1px;background:#3a3a3a"></div>
<div class="a" style="left:1300px;top:124px;width:1px;height:18px;background:#b4b4b4"></div><svg class="a" style="left:1309px;top:131px" width="6" height="6" viewBox="0 0 6 6"><path d="M0.5 0.5 L5.5 5.5 M5.5 0.5 L0.5 5.5" stroke="#404040" stroke-width="1"/></svg>
<div class="a" style="left:1321px;top:124px;width:1px;height:18px;background:#b4b4b4"></div><svg class="a" style="left:1328px;top:129px" width="10" height="10" viewBox="0 0 10 10"><rect x="3.5" y="0.5" width="5.5" height="5" fill="none" stroke="#404040" stroke-width="1.1"/><path d="M2.2 3 H0.6 V8.9 H6.4 V7.3" fill="none" stroke="#404040" stroke-width="1.1"/></svg>
<div class="lbl" style="left:293px;top:152px;line-height:14px">Клиент:</div>
<div class="fld" style="left:341px;top:150px;width:450px;height:20px"></div>
<div class="a" style="left:727px;top:151px;width:1px;height:18px;background:#b4b4b4"></div><div class="a" style="left:735px;top:164px;width:1px;height:1px;background:#3a3a3a"></div><div class="a" style="left:738px;top:164px;width:1px;height:1px;background:#3a3a3a"></div><div class="a" style="left:741px;top:164px;width:1px;height:1px;background:#3a3a3a"></div>
<div class="a" style="left:748px;top:151px;width:1px;height:18px;background:#b4b4b4"></div><svg class="a" style="left:757px;top:158px" width="6" height="6" viewBox="0 0 6 6"><path d="M0.5 0.5 L5.5 5.5 M5.5 0.5 L0.5 5.5" stroke="#404040" stroke-width="1"/></svg>
<div class="a" style="left:769px;top:151px;width:1px;height:18px;background:#b4b4b4"></div><svg class="a" style="left:776px;top:156px" width="10" height="10" viewBox="0 0 10 10"><rect x="3.5" y="0.5" width="5.5" height="5" fill="none" stroke="#404040" stroke-width="1.1"/><path d="M2.2 3 H0.6 V8.9 H6.4 V7.3" fill="none" stroke="#404040" stroke-width="1.1"/></svg>
<div class="lbl" style="left:799px;top:152px;line-height:14px">Исследование:</div>
<div class="fld" style="left:879px;top:150px;width:464px;height:20px"></div>
<div class="a" style="left:1279px;top:151px;width:1px;height:18px;background:#b4b4b4"></div><div class="a" style="left:1287px;top:164px;width:1px;height:1px;background:#3a3a3a"></div><div class="a" style="left:1290px;top:164px;width:1px;height:1px;background:#3a3a3a"></div><div class="a" style="left:1293px;top:164px;width:1px;height:1px;background:#3a3a3a"></div>
<div class="a" style="left:1300px;top:151px;width:1px;height:18px;background:#b4b4b4"></div><svg class="a" style="left:1309px;top:158px" width="6" height="6" viewBox="0 0 6 6"><path d="M0.5 0.5 L5.5 5.5 M5.5 0.5 L0.5 5.5" stroke="#404040" stroke-width="1"/></svg>
<div class="a" style="left:1321px;top:151px;width:1px;height:18px;background:#b4b4b4"></div><svg class="a" style="left:1328px;top:156px" width="10" height="10" viewBox="0 0 10 10"><rect x="3.5" y="0.5" width="5.5" height="5" fill="none" stroke="#404040" stroke-width="1.1"/><path d="M2.2 3 H0.6 V8.9 H6.4 V7.3" fill="none" stroke="#404040" stroke-width="1.1"/></svg>
<div class="a" style="left:293px;top:177px;width:842px;height:534px;border:1px solid #b8b8b8;background:#fff"></div>
<div class="tab" style="top:177px"><span class="t">Документы</span></div>
<div class="tab" style="top:199px"><span class="t">Назначены</span></div>
<div class="tab" style="top:221px;background:#fff;border-left-color:#fff"><span class="t">Забраны/приняты</span></div>
<div class="tab" style="top:243px"><span class="t">Переданы в другую лабораторию</span></div>
<div class="tab" style="top:265px"><span class="t">Проанализированы к обработке</span></div>
<div class="tab" style="top:287px"><span class="t">Проанализированы к возврату</span></div>
<div class="tab" style="top:309px"><span class="t">Утеряны</span></div>
<div class="lbl" style="left:301px;top:187px;line-height:14px">Дата начала:</div>
<div class="a" style="left:402px;top:182px;width:102px;height:26px;border:2px solid #f3c01c;background:#fff"></div>
<div class="a" style="left:408px;top:188px;width:30px;height:13px;background:#4d62c4"></div>
<div class="a" style="left:415px;top:198px;width:1px;height:1px;background:#fff"></div><div class="a" style="left:425px;top:198px;width:1px;height:1px;background:#fff"></div>
<div class="a" style="left:458px;top:187px;width:1px;height:16px;background:#9a9a9a"></div><svg class="a" style="left:464px;top:191px" width="11" height="9" viewBox="0 0 11 9"><rect x="0.5" y="0.5" width="10" height="8" fill="#fff" stroke="#3a3a3a" stroke-width="1"/><rect x="0.5" y="0.5" width="10" height="1.5" fill="#3a3a3a"/><g fill="#555"><rect x="2" y="3" width="1" height="1"/><rect x="4" y="3" width="1" height="1"/><rect x="6" y="3" width="1" height="1"/><rect x="8" y="3" width="1" height="1"/><rect x="2" y="5" width="1" height="1"/><rect x="4" y="5" width="1" height="1"/><rect x="6" y="5" width="1" height="1"/><rect x="8" y="5" width="1" height="1"/><rect x="2" y="7" width="1" height="0.8"/><rect x="4" y="7" width="1" height="0.8"/></g></svg>
<div class="a" style="left:480px;top:187px;width:1px;height:16px;background:#9a9a9a"></div><svg class="a" style="left:488px;top:193px" width="6" height="6" viewBox="0 0 6 6"><path d="M0.5 0.5 L5.5 5.5 M5.5 0.5 L0.5 5.5" stroke="#404040" stroke-width="1"/></svg>
<div class="lbl" style="left:509px;top:187px;line-height:14px">Код пробы:</div>
<div class="fld" style="left:573px;top:186px;width:88px;height:19px"></div>
<div class="a" style="left:639px;top:187px;width:1px;height:17px;background:#b4b4b4"></div><svg class="a" style="left:648px;top:193px" width="6" height="6" viewBox="0 0 6 6"><path d="M0.5 0.5 L5.5 5.5 M5.5 0.5 L0.5 5.5" stroke="#404040" stroke-width="1"/></svg>
<div class="lbl" style="left:301px;top:214px;line-height:14px">Местонахождение:</div>
<div class="fld" style="left:405px;top:213px;width:256px;height:19px"></div>
<div class="a" style="left:639px;top:214px;width:1px;height:17px;background:#b4b4b4"></div><div class="a" style="left:647px;top:226px;width:1px;height:1px;background:#3a3a3a"></div><div class="a" style="left:650px;top:226px;width:1px;height:1px;background:#3a3a3a"></div><div class="a" style="left:653px;top:226px;width:1px;height:1px;background:#3a3a3a"></div>
<div class="cb" style="left:301px;width:84px"><span class="t">Забор анализа</span></div>
<div class="cb" style="left:390px;width:109px"><span class="t">Анализ материалов</span></div>
<div class="cb" style="left:504px;width:115px"><span class="t">Передача материала</span></div>
<div class="cb" style="left:624px;width:126px"><span class="t">Получение материалов</span></div>
<div class="cb" style="left:755px;width:63px"><span class="t">Обработка</span></div>
<div class="cb" style="left:823px;width:39px"><span class="t">Утеря</span></div>
<div class="cb" style="left:867px;width:120px;text-align:left;padding-left:19px"><span class="t">Открыть документ</span></div>
<svg class="a" style="left:869px;top:243px" width="17" height="17" viewBox="0 0 17 17"><defs><radialGradient id="mg" cx="0.4" cy="0.35" r="0.7"><stop offset="0" stop-color="#ffffff"/><stop offset="1" stop-color="#9cc8ec"/></radialGradient></defs><path d="M6.5 10 L2 14.8" stroke="#c8862a" stroke-width="3.2" stroke-linecap="round"/><circle cx="10.2" cy="6.3" r="5" fill="url(#mg)" stroke="#8a6a3a" stroke-width="1.2"/></svg>
<div class="cb" style="left:1089px;width:38px;text-align:left;padding-left:3px"><span class="t">Еще</span></div>
<svg class="a" style="left:1117px;top:250px" width="7" height="4" viewBox="0 0 7 4"><path d="M0 0 H7 L3.5 4 Z" fill="#333"/></svg>
<div class="a" style="left:301px;top:272px;width:826px;height:429px;border:1px solid #a4a4a4;background:#fff"></div>
<div class="a" style="left:302px;top:273px;width:808px;height:21px;background:#f0f0f0;border-bottom:1px solid #dcdcdc"></div>
<div class="a" style="left:417px;top:274px;width:1px;height:18px;background:#d4d4d4"></div><div class="a" style="left:418px;top:274px;width:1px;height:18px;background:#fff"></div>
<div class="a" style="left:570px;top:274px;width:1px;height:18px;background:#d4d4d4"></div><div class="a" style="left:571px;top:274px;width:1px;height:18px;background:#fff"></div>
<div class="a" style="left:650px;top:274px;width:1px;height:18px;background:#d4d4d4"></div><div class="a" style="left:651px;top:274px;width:1px;height:18px;background:#fff"></div>
<div class="a" style="left:803px;top:274px;width:1px;height:18px;background:#d4d4d4"></div><div class="a" style="left:804px;top:274px;width:1px;height:18px;background:#fff"></div>
<div class="a" style="left:956px;top:274px;width:1px;height:18px;background:#d4d4d4"></div><div class="a" style="left:957px;top:274px;width:1px;height:18px;background:#fff"></div>
<div class="lbl" style="left:306px;top:275px;line-height:14px">Дата</div>
<div class="lbl" style="left:422px;top:275px;line-height:14px">Местонахождение</div>
<div class="lbl" style="left:575px;top:275px;line-height:14px">№ пробы</div>
<div class="lbl" style="left:655px;top:275px;line-height:14px">Клиент</div>
<div class="lbl" style="left:808px;top:275px;line-height:14px">Статус</div>
<div class="lbl" style="left:961px;top:275px;line-height:14px">Исследование</div>
<svg class="a" style="left:401px;top:278px" width="7" height="11" viewBox="0 0 7 11"><path d="M3.5 0.5 V9.5" stroke="#222" stroke-width="1.2"/><path d="M0.6 6.6 L3.5 10.2 L6.4 6.6" fill="none" stroke="#222" stroke-width="1.2"/></svg>
<div class="a" style="left:302px;top:294px;width:808px;height:19px;background:#f7f7f7;border-bottom:1px solid #e2e2e2"></div>
<div class="a" style="left:306px;top:301px;line-height:0"><svg width="16" height="9" viewBox="0 0 16 9"><defs><linearGradient id="ri" x1="0" y1="0" x2="0" y2="1"><stop offset="0" stop-color="#f4f8fc"/><stop offset="1" stop-color="#b8d8f0"/></linearGradient></defs><rect x="0.5" y="0.5" width="15" height="8" rx="1" fill="url(#ri)" stroke="#8a8a8a" stroke-width="0.9"/><path d="M2.5 6 Q4 2 5.5 4.5 Q7 7 8.5 4 L13 4" fill="none" stroke="#2a4a6a" stroke-width="1.1"/></svg></div>
<div class="lbl" style="left:326px;top:296px;line-height:14px">Антипова Викт...</div>
<div class="lbl" style="left:422px;top:296px;line-height:14px">Центральная клиника</div>
<div class="lbl" style="left:575px;top:296px;line-height:14px">П52672</div>
<div class="lbl" style="left:655px;top:296px;line-height:14px">Антипова Виктория Серге...</div>
<div class="lbl" style="left:808px;top:296px;line-height:14px">Забран</div>
<div class="lbl" style="left:961px;top:296px;line-height:14px">Анализ крови о/с</div>
<div class="a" style="left:302px;top:313px;width:808px;height:19px;background:#fff;border-bottom:1px solid #e2e2e2"></div>
<div class="a" style="left:306px;top:320px;line-height:0"><svg width="16" height="9" viewBox="0 0 16 9"><defs><linearGradient id="ri" x1="0" y1="0" x2="0" y2="1"><stop offset="0" stop-color="#f4f8fc"/><stop offset="1" stop-color="#b8d8f0"/></linearGradient></defs><rect x="0.5" y="0.5" width="15" height="8" rx="1" fill="url(#ri)" stroke="#8a8a8a" stroke-width="0.9"/><path d="M2.5 6 Q4 2 5.5 4.5 Q7 7 8.5 4 L13 4" fill="none" stroke="#2a4a6a" stroke-width="1.1"/></svg></div>
<div class="lbl" style="left:326px;top:315px;line-height:14px">Антонова Ирин...</div>
<div class="lbl" style="left:422px;top:315px;line-height:14px">Центральная клиника</div>
<div class="lbl" style="left:655px;top:315px;line-height:14px">Антонова Ирина Александ...</div>
<div class="lbl" style="left:808px;top:315px;line-height:14px">Забран</div>
<div class="lbl" style="left:961px;top:315px;line-height:14px">Анализ крови о/с</div>
<div class="a" style="left:302px;top:332px;width:808px;height:19px;background:#f7f7f7;border-bottom:1px solid #e2e2e2"></div>
<div class="a" style="left:306px;top:339px;line-height:0"><svg width="16" height="9" viewBox="0 0 16 9"><defs><linearGradient id="ri" x1="0" y1="0" x2="0" y2="1"><stop offset="0" stop-color="#f4f8fc"/><stop offset="1" stop-color="#b8d8f0"/></linearGradient></defs><rect x="0.5" y="0.5" width="15" height="8" rx="1" fill="url(#ri)" stroke="#8a8a8a" stroke-width="0.9"/><path d="M2.5 6 Q4 2 5.5 4.5 Q7 7 8.5 4 L13 4" fill="none" stroke="#2a4a6a" stroke-width="1.1"/></svg></div>
<div class="lbl" style="left:326px;top:334px;line-height:14px">Векин Петр Ив...</div>
<div class="lbl" style="left:422px;top:334px;line-height:14px">Центральная клиника</div>
<div class="lbl" style="left:575px;top:334px;line-height:14px">ПЦ05325</div>
<div class="lbl" style="left:655px;top:334px;line-height:14px">Векин Петр Иванович</div>
<div class="lbl" style="left:808px;top:334px;line-height:14px">Забран</div>
<div class="lbl" style="left:961px;top:334px;line-height:14px">Анализ крови о/с</div>
<div class="a" style="left:302px;top:351px;width:808px;height:19px;background:#fff;border-bottom:1px solid #e2e2e2"></div>
<div class="a" style="left:306px;top:358px;line-height:0"><svg width="16" height="9" viewBox="0 0 16 9"><defs><linearGradient id="ri" x1="0" y1="0" x2="0" y2="1"><stop offset="0" stop-color="#f4f8fc"/><stop offset="1" stop-color="#b8d8f0"/></linearGradient></defs><rect x="0.5" y="0.5" width="15" height="8" rx="1" fill="url(#ri)" stroke="#8a8a8a" stroke-width="0.9"/><path d="M2.5 6 Q4 2 5.5 4.5 Q7 7 8.5 4 L13 4" fill="none" stroke="#2a4a6a" stroke-width="1.1"/></svg></div>
<div class="lbl" style="left:326px;top:353px;line-height:14px">Журавлев Кон...</div>
<div class="lbl" style="left:422px;top:353px;line-height:14px">Центральная клиника</div>
<div class="lbl" style="left:575px;top:353px;line-height:14px">П3526</div>
<div class="lbl" style="left:655px;top:353px;line-height:14px">Журавлев Константин Пе...</div>
<div class="lbl" style="left:808px;top:353px;line-height:14px">Забран</div>
<div class="lbl" style="left:961px;top:353px;line-height:14px">Анализ мочи</div>
<div class="a" style="left:302px;top:370px;width:808px;height:19px;background:#f7f7f7;border-bottom:1px solid #e2e2e2"></div>
<div class="a" style="left:306px;top:377px;line-height:0"><svg width="16" height="9" viewBox="0 0 16 9"><defs><linearGradient id="ri" x1="0" y1="0" x2="0" y2="1"><stop offset="0" stop-color="#f4f8fc"/><stop offset="1" stop-color="#b8d8f0"/></linearGradient></defs><rect x="0.5" y="0.5" width="15" height="8" rx="1" fill="url(#ri)" stroke="#8a8a8a" stroke-width="0.9"/><path d="M2.5 6 Q4 2 5.5 4.5 Q7 7 8.5 4 L13 4" fill="none" stroke="#2a4a6a" stroke-width="1.1"/></svg></div>
<div class="lbl" style="left:326px;top:372px;line-height:14px">Краснов Анато...</div>
<div class="lbl" style="left:422px;top:372px;line-height:14px">Центральная клиника</div>
<div class="lbl" style="left:575px;top:372px;line-height:14px">ПМ357</div>
<div class="lbl" style="left:655px;top:372px;line-height:14px">Краснов Анатолий Петров...</div>
<div class="lbl" style="left:808px;top:372px;line-height:14px">Забран</div>
<div class="lbl" style="left:961px;top:372px;line-height:14px">Анализ мочи</div>
<div class="a" style="left:302px;top:389px;width:808px;height:19px;background:#fff;border-bottom:1px solid #e2e2e2"></div>
<div class="a" style="left:306px;top:396px;line-height:0"><svg width="16" height="9" viewBox="0 0 16 9"><defs><linearGradient id="ri" x1="0" y1="0" x2="0" y2="1"><stop offset="0" stop-color="#f4f8fc"/><stop offset="1" stop-color="#b8d8f0"/></linearGradient></defs><rect x="0.5" y="0.5" width="15" height="8" rx="1" fill="url(#ri)" stroke="#8a8a8a" stroke-width="0.9"/><path d="M2.5 6 Q4 2 5.5 4.5 Q7 7 8.5 4 L13 4" fill="none" stroke="#2a4a6a" stroke-width="1.1"/></svg></div>
<div class="lbl" style="left:326px;top:391px;line-height:14px">Пехова Ирина ...</div>
<div class="lbl" style="left:422px;top:391px;line-height:14px">Центральная клиника</div>
<div class="lbl" style="left:575px;top:391px;line-height:14px">П344</div>
<div class="lbl" style="left:655px;top:391px;line-height:14px">Пехова Ирина Валерьевна</div>
<div class="lbl" style="left:808px;top:391px;line-height:14px">Забран</div>
<div class="lbl" style="left:961px;top:391px;line-height:14px">Анализ крови о/с</div>
<div class="a" style="left:302px;top:408px;width:808px;height:19px;background:#f7f7f7;border-bottom:1px solid #e2e2e2"></div>
<div class="a" style="left:306px;top:415px;line-height:0"><svg width="16" height="9" viewBox="0 0 16 9"><defs><linearGradient id="ri" x1="0" y1="0" x2="0" y2="1"><stop offset="0" stop-color="#f4f8fc"/><stop offset="1" stop-color="#b8d8f0"/></linearGradient></defs><rect x="0.5" y="0.5" width="15" height="8" rx="1" fill="url(#ri)" stroke="#8a8a8a" stroke-width="0.9"/><path d="M2.5 6 Q4 2 5.5 4.5 Q7 7 8.5 4 L13 4" fill="none" stroke="#2a4a6a" stroke-width="1.1"/></svg></div>
<div class="lbl" style="left:326px;top:410px;line-height:14px">Полякова Мар...</div>
<div class="lbl" style="left:422px;top:410px;line-height:14px">Центральная клиника</div>
<div class="lbl" style="left:575px;top:410px;line-height:14px">П4352</div>
<div class="lbl" style="left:655px;top:410px;line-height:14px">Полякова Марина</div>
<div class="lbl" style="left:808px;top:410px;line-height:14px">Забран</div>
<div class="lbl" style="left:961px;top:410px;line-height:14px">Анализ крови о/с</div>
<div class="a" style="left:302px;top:427px;width:808px;height:19px;background:#fff;border-bottom:1px solid #e2e2e2"></div>
<div class="a" style="left:306px;top:434px;line-height:0"><svg width="16" height="9" viewBox="0 0 16 9"><defs><linearGradient id="ri" x1="0" y1="0" x2="0" y2="1"><stop offset="0" stop-color="#f4f8fc"/><stop offset="1" stop-color="#b8d8f0"/></linearGradient></defs><rect x="0.5" y="0.5" width="15" height="8" rx="1" fill="url(#ri)" stroke="#8a8a8a" stroke-width="0.9"/><path d="M2.5 6 Q4 2 5.5 4.5 Q7 7 8.5 4 L13 4" fill="none" stroke="#2a4a6a" stroke-width="1.1"/></svg></div>
<div class="lbl" style="left:326px;top:429px;line-height:14px">Черняева Елен...</div>
<div class="lbl" style="left:422px;top:429px;line-height:14px">Центральная клиника</div>
<div class="lbl" style="left:575px;top:429px;line-height:14px">112</div>
<div class="lbl" style="left:655px;top:429px;line-height:14px">Черняева Елена Антоновна</div>
<div class="lbl" style="left:808px;top:429px;line-height:14px">Забран</div>
<div class="lbl" style="left:961px;top:429px;line-height:14px">Анализ крови о/с</div>
<div class="a" style="left:302px;top:446px;width:808px;height:19px;background:#fff;border-bottom:1px solid #e2e2e2"></div><div class="a" style="left:302px;top:447px;width:808px;height:16px;background:#fdf4cc"></div>
<div class="a" style="left:302px;top:447px;width:115px;height:16px;background:#fbeaa0"></div><div class="a" style="left:417px;top:447px;width:1px;height:16px;background:#fffbea"></div>
<div class="a" style="left:306px;top:453px;line-height:0"><svg width="16" height="9" viewBox="0 0 16 9"><defs><linearGradient id="ri" x1="0" y1="0" x2="0" y2="1"><stop offset="0" stop-color="#f4f8fc"/><stop offset="1" stop-color="#b8d8f0"/></linearGradient></defs><rect x="0.5" y="0.5" width="15" height="8" rx="1" fill="url(#ri)" stroke="#8a8a8a" stroke-width="0.9"/><path d="M2.5 6 Q4 2 5.5 4.5 Q7 7 8.5 4 L13 4" fill="none" stroke="#2a4a6a" stroke-width="1.1"/></svg></div>
<div class="lbl" style="left:326px;top:448px;line-height:14px">Юрчик Мария Б...</div>
<div class="lbl" style="left:422px;top:448px;line-height:14px">Центральная клиника</div>
<div class="lbl" style="left:575px;top:448px;line-height:14px">ПМ358</div>
<div class="lbl" style="left:655px;top:448px;line-height:14px">Юрчик Мария Борисовна</div>
<div class="lbl" style="left:808px;top:448px;line-height:14px">Забран</div>
<div class="lbl" style="left:961px;top:448px;line-height:14px">Анализ мочи</div>
<svg class="a" style="left:1114px;top:281px" width="7" height="4" viewBox="0 0 7 4"><path d="M0.5 3.5 L3.5 0.5 L6.5 3.5 Z" fill="#d4d4d4"/></svg>
<div class="a" style="left:1114px;top:478px;width:8px;height:15px;border-radius:2px;background:#dcdcdc;border:1px solid #c8c8c8"></div>
<svg class="a" style="left:1115px;top:688px" width="7" height="4" viewBox="0 0 7 4"><path d="M0.5 0.5 L3.5 3.5 L6.5 0.5 Z" fill="#d0d0d0"/></svg>
<!--END-->
</div>
</body></html>
